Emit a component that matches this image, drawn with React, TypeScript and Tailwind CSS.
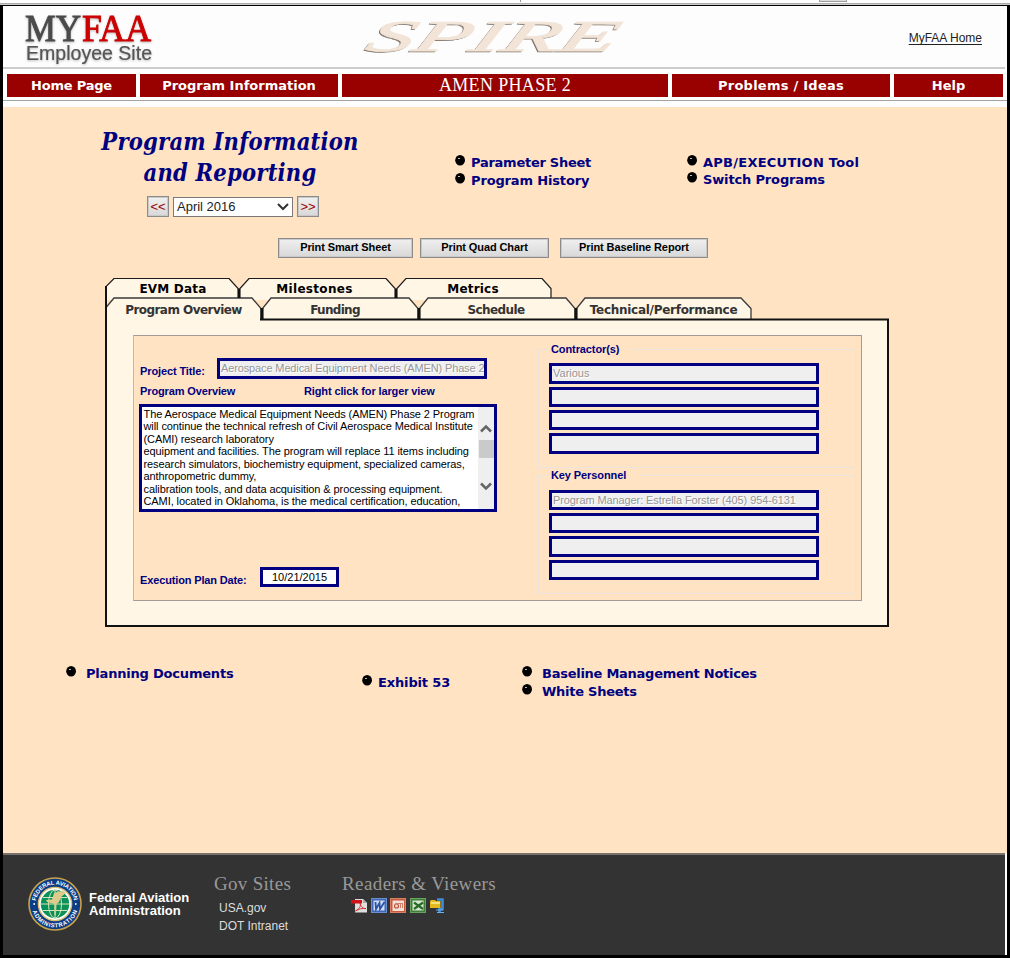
import type { ReactNode } from "react";

const verdana = "font-['DejaVu_Sans',sans-serif] font-bold";

function NavItem({ className, children }: { className: string; children: ReactNode }) {
  return (
    <a className={`flex h-[23px] shrink-0 items-center justify-center bg-[#990000] text-white ${className}`}>
      {children}
    </a>
  );
}

function Bullet() {
  return (
    <svg className="block shrink-0" width="10" height="11" viewBox="0 0 10 11">
      <ellipse cx="5.1" cy="5.3" rx="4.9" ry="5.3" fill="#000" />
      <rect x="3" y="3" width="2" height="1" fill="#bbb" />
    </svg>
  );
}

function BulletLink({ className = "", tracking = "tracking-[-0.26px]", children }: { className?: string; tracking?: string; children: ReactNode }) {
  return (
    <div className={`flex items-start ${className}`}>
      <Bullet />
      <a className={`${verdana} whitespace-nowrap text-[13px] leading-[16px] text-[#000080] ${tracking}`}>{children}</a>
    </div>
  );
}

function GrayButton({ className, children }: { className: string; children: ReactNode }) {
  return (
    <button
      className={`block shrink-0 whitespace-nowrap border border-[#8b8b8b] bg-linear-to-b from-[#f0f0f0] to-[#d8d8d8] shadow-[inset_0_0_0_1px_#c9c9c9] ${className}`}
    >
      {children}
    </button>
  );
}

function Field({ className = "h-[20px]", children }: { className?: string; children?: ReactNode }) {
  return (
    <div
      className={`w-[270px] shrink-0 overflow-hidden whitespace-nowrap border-[3px] border-[#000080] bg-[#efefef] pl-px text-[11px] leading-[14px] text-[#969696] [text-shadow:1px_1px_0_#fff] ${className}`}
    >
      {children}
    </div>
  );
}

function FieldGroup({ title, titleWidth, className, children }: { title: string; titleWidth: string; className: string; children: ReactNode }) {
  return (
    <div className={`flex w-[318px] flex-col border border-[#ebe3de] pl-[10px] ${className}`}>
      <div className={`-mt-[8px] -ml-[2px] h-[14px] shrink-0 bg-[#ffe3c3] pl-[4px] text-[11px] font-bold leading-[14px] tracking-[-0.1px] text-[#000080] ${titleWidth}`}>
        {title}
      </div>
      {children}
    </div>
  );
}

function SpireLogo() {
  return (
    <svg className="block overflow-visible" width="280" height="40" viewBox="360 16 280 40">
      <g fontFamily="Liberation Serif" fontSize="44" fontStyle="italic">
        <g transform="translate(362 52) skewX(-22)">
          <text textLength="249" lengthAdjust="spacingAndGlyphs" fill="#7d7268" stroke="#7d7268" strokeWidth="0.4">SPIRE</text>
        </g>
        <g transform="translate(363.500 50.800) skewX(-22)">
          <text textLength="249" lengthAdjust="spacingAndGlyphs" fill="#f2e4d7" stroke="#f2e4d7" strokeWidth="0.800">SPIRE</text>
        </g>
      </g>
    </svg>
  );
}

function Seal() {
  return (
    <svg className="block shrink-0" width="54" height="54" viewBox="0 0 54 54">
      <defs>
        <path id="ringTop" d="M7.600 27a19.400 19.400 0 0 1 38.800 0" />
        <path id="ringBottom" d="M3.600 27a23.400 23.400 0 0 0 46.800 0" />
      </defs>
      <circle cx="27" cy="27" r="26" fill="#0b3d86" stroke="#c8a24a" strokeWidth="1.6" />
      <circle cx="27" cy="27" r="16.600" fill="#fff" stroke="#d9bd72" strokeWidth="1.4" />
      <circle cx="27" cy="27" r="14.200" fill="#0a9059" />
      <g fill="none" stroke="#d9e5b8" strokeWidth="1">
        <ellipse cx="27" cy="27" rx="6.500" ry="14.200" />
        <path d="M13 27H41M15 20.500H39M15 33.500H39M27 13V41" />
      </g>
      <path d="M18 23L24 22.500L26 16L35 13.500L38 16L33 20L31 25L28.500 27L28 38L26.500 38L26.500 27L19 25Z" fill="#dccb8b" />
      <g fontFamily="Liberation Sans" fontWeight="bold" fontSize="5.8" fill="#fff">
        <text>
          <textPath href="#ringTop" startOffset="3" textLength="54">FEDERAL AVIATION</textPath>
        </text>
        <text>
          <textPath href="#ringBottom" startOffset="7" textLength="59">ADMINISTRATION</textPath>
        </text>
      </g>
      <circle cx="6.200" cy="27" r="0.900" fill="#fff" />
      <circle cx="47.800" cy="27" r="0.900" fill="#fff" />
    </svg>
  );
}

function ViewerIcons() {
  return (
    <svg className="block" width="94" height="16" viewBox="0 0 94 16">
      <path d="M4 1H12L16 5V14.500H4Z" fill="#dedede" />
      <path d="M12 1L16 5H12Z" fill="#aaa" />
      <path d="M0 2H11V5.500H0Z" fill="#d0121a" />
      <path d="M4.500 13C8 11 10.500 8 9 5C10 9 12 11 15 10.500C11 10 8 11 4.500 13Z" fill="none" stroke="#d2262b" strokeWidth="0.9" />
      <rect x="20.500" y="0.500" width="15" height="14" fill="#3f68b6" stroke="#6b8fd0" />
      <rect x="22.500" y="2.500" width="11" height="10" fill="#cfdcf4" />
      <path d="M24.500 4L25 11L28.500 5L29 11L33.500 4" fill="none" stroke="#2b51a3" strokeWidth="1.8" />
      <rect x="39.500" y="0.500" width="15" height="14" fill="#c65b3c" stroke="#d98066" />
      <rect x="41.500" y="2.500" width="11.500" height="10.500" fill="#f3dfd6" />
      <circle cx="45.500" cy="8" r="2" fill="none" stroke="#bd5437" strokeWidth="1.2" />
      <path d="M49.500 6V10M51.500 6V10M44 5.500H52" fill="none" stroke="#cf8169" />
      <rect x="59.500" y="0.500" width="15" height="14" fill="#3f7f3a" stroke="#69a362" />
      <rect x="61.500" y="2.500" width="11" height="10" fill="#d5e8d0" />
      <path d="M63 4.500L72 11M72 4.500L63 11" stroke="#2a6b2a" strokeWidth="2.200" />
      <path d="M86 1.500H91.500V11H88.500V14" fill="none" stroke="#3c8ddb" strokeWidth="2.600" />
      <path d="M79 3L80 2H84L85 3H89.500V10H79Z" fill="#e3b91e" />
      <path d="M80 4H89V6H80Z" fill="#f7e37c" />
      <path d="M85 12H92M86 14.500H93" stroke="#69b2ef" />
    </svg>
  );
}

function TabOutlines() {
  return (
    <svg className="absolute left-0 top-0" width="784" height="349" viewBox="105 278 784 349">
      <g fill="#fff6e6" stroke="#1c1c1c" strokeWidth="1.2">
        <path d="M105.500 300V287L114 278.500H229L238.500 289V300" />
        <path d="M239.500 300V289L249 278.500H386L395.500 289V300" />
        <path d="M396.500 300V289L406 278.500H542L551 288.500V300" />
      </g>
      <path d="M106 319.500H888V626H106Z" fill="#fff6e6" />
      <g fill="#fff6e6" stroke="#3a3a3a" strokeWidth="1.300">
        <path d="M106 320V307.500L114 298H252L261 308.500V320" />
        <path d="M262.500 320V308.500L271 298H409L418 308.500V320" />
        <path d="M419.500 320V308.500L428 298H566L575 308.500V320" />
        <path d="M576.500 320V308.500L585 298H741L751 308.500V320" />
      </g>
      <path d="M239 289V298M396 289V298M262 308V319M419 308V319M576 308V319" stroke="#111" strokeWidth="3" />
      <path d="M107 318V325H260V318Z" fill="#fff6e6" />
      <path d="M106 286V626H888V319.500H260" fill="none" stroke="#111" strokeWidth="2" />
    </svg>
  );
}

const tab = "shrink-0 whitespace-nowrap text-center font-['DejaVu_Sans',sans-serif] font-bold text-[12px] leading-[20px]";

export default function App() {
  return (
    <div className="flex h-[958px] w-[1010px] flex-col overflow-hidden bg-black font-['Liberation_Sans',sans-serif]">
      <div className="flex h-[3px] shrink-0 bg-white">
        <div className="ml-[520px] h-[2px] w-px bg-[#999]" />
        <div className="ml-[298px] h-[2px] w-[28px] border border-t-0 border-[#a0a0a0] bg-[#ddd]" />
      </div>
      <div className="h-[2px] shrink-0 border-t border-[#aaa] bg-[#ccc]" />

      <header className="ml-[3px] mt-px w-[1004px] shrink-0 bg-white">
        <div className="flex h-[61px] w-[1002px] items-start bg-[#fdfdfd]">
          <div className="w-[160px] shrink-0 pl-[21px] pt-[8px]">
            <svg className="block overflow-visible" width="130" height="52" viewBox="0 0 130 52">
              <g style={{ filter: "drop-shadow(0.5px 1px 1px #bbb)" }}>
                <g fontFamily="Liberation Serif" fontSize="37" strokeWidth="0.9">
                  <text x="1" y="27" textLength="56" lengthAdjust="spacingAndGlyphs" fill="#4b4b4b" stroke="#4b4b4b">MY</text>
                  <text x="58" y="27" textLength="69" lengthAdjust="spacingAndGlyphs" fill="#cc0000" stroke="#cc0000">FAA</text>
                </g>
                <text x="2" y="46" fontFamily="Liberation Sans" fontSize="19.5" textLength="126" lengthAdjust="spacingAndGlyphs" fill="#555" stroke="#555" strokeWidth="0.2">Employee Site</text>
              </g>
            </svg>
          </div>
          <div className="ml-[197px] pt-[10px]">
            <SpireLogo />
          </div>
          <a className="ml-auto mr-[23px] mt-[24px] whitespace-nowrap text-[12px] leading-[16px] text-[#222] underline underline-offset-2">MyFAA Home</a>
        </div>
        <div className="h-[2px] w-[1002px] bg-[#ccc]" />
        <nav className="flex h-[32px] w-[1004px] gap-[4px] border-b border-[#a5a5a5] pl-[4px] pt-[5px]">
          <NavItem className={`w-[129px] text-[13px] tracking-[-0.2px] ${verdana}`}>Home Page</NavItem>
          <NavItem className={`w-[198px] text-[13px] ${verdana}`}>Program Information</NavItem>
          <NavItem className="w-[326px] font-['Liberation_Serif',serif] text-[18px] tracking-[0.35px]">AMEN PHASE 2</NavItem>
          <NavItem className={`w-[218px] text-[13px] tracking-[0.25px] ${verdana}`}>Problems / Ideas</NavItem>
          <NavItem className={`w-[109px] text-[13px] ${verdana}`}>Help</NavItem>
        </nav>
        <div className="h-[6px]" />
      </header>

      <main className="ml-[3px] flex h-[746px] w-[1004px] shrink-0 flex-col bg-[#ffe3c3]">
        <div className="flex h-[131px] shrink-0">
          <div className="ml-[87px] w-[280px] shrink-0 pt-[20px]">
            <h1 className="text-center font-['DejaVu_Serif_Condensed','DejaVu_Serif',serif] text-[23.500px] font-bold italic leading-[31px] tracking-[0.2px] text-[#000080]">
              <span className="block whitespace-nowrap">Program Information</span>
              <span className="block whitespace-nowrap">and Reporting</span>
            </h1>
            <div className="mt-[7px] flex items-start pl-[57px]">
              <GrayButton className="h-[21px] w-[22px] text-[13px] leading-[17px] text-[#990000]">&lt;&lt;</GrayButton>
              <div className="ml-[4px] mt-px flex h-[20px] w-[120px] items-center justify-between border border-[#7a7a7a] bg-white pl-[3px] pr-[3px] text-[13px] text-[#222]">
                April 2016
                <svg width="12" height="8" viewBox="0 0 12 8"><path d="M1 1L6 6L11 1" fill="none" stroke="#333" strokeWidth="2" /></svg>
              </div>
              <GrayButton className="ml-[4px] h-[21px] w-[22px] text-[13px] leading-[17px] text-[#990000]">&gt;&gt;</GrayButton>
            </div>
          </div>
          <div className="ml-[85px] flex w-[200px] flex-col gap-[2px] pt-[48px]">
            <BulletLink className="gap-[6px]">Parameter Sheet</BulletLink>
            <BulletLink className="gap-[6px]" tracking="tracking-[-0.15px]">Program History</BulletLink>
          </div>
          <div className="ml-[32px] flex w-[220px] flex-col gap-px pt-[48px]">
            <BulletLink className="gap-[6px]" tracking="tracking-[0.25px]">APB/EXECUTION Tool</BulletLink>
            <BulletLink className="gap-[6px]" tracking="tracking-[-0.15px]">Switch Programs</BulletLink>
          </div>
        </div>

        <div className="ml-[275px] flex h-[40px] shrink-0 text-[11px] font-bold leading-[16px] tracking-[-0.1px] text-black">
          <GrayButton className="flex h-[20px] w-[135px] justify-center">Print Smart Sheet</GrayButton>
          <GrayButton className="ml-[7px] flex h-[20px] w-[129px] justify-center">Print Quad Chart</GrayButton>
          <GrayButton className="ml-[11px] flex h-[20px] w-[148px] justify-center">Print Baseline Report</GrayButton>
        </div>

        <section className="relative ml-[102px] h-[349px] w-[784px] shrink-0">
          <TabOutlines />
          <div className="relative flex h-full flex-col">
            <div className="flex h-[21px] shrink-0 pt-px">
              <div className={`w-[136px] tracking-[0.2px] ${tab}`}>EVM Data</div>
              <div className={`ml-[1px] w-[145px] tracking-[0.3px] ${tab}`}>Milestones</div>
              <div className={`ml-[12px] w-[148px] tracking-[0.2px] ${tab}`}>Metrics</div>
            </div>
            <div className="flex h-[21px] shrink-0 pt-px text-[#333]">
              <div className={`w-[157px] tracking-[-0.55px] ${tab}`}>Program Overview</div>
              <div className={`w-[146px] tracking-[-0.7px] ${tab}`}>Funding</div>
              <div className={`ml-[12px] w-[152px] tracking-[-0.6px] ${tab}`}>Schedule</div>
              <div className={`ml-[8px] w-[167px] tracking-[-0.28px] ${tab}`}>Technical/Performance</div>
            </div>

            <div className="ml-[28px] mt-[15px] flex h-[266px] w-[729px] shrink-0 border border-[#a39c96] border-l-[#bbb] bg-[#ffe3c3]">
              <div className="w-[404px] shrink-0 pl-[5px] text-[11px]">
                <div className="flex h-[45px] pt-[22px]">
                  <label className="w-[78px] shrink-0 pl-px pt-[6px] font-bold leading-[14px] tracking-[-0.12px] text-[#000080]">Project Title:</label>
                  <Field className="h-[21px] tracking-[-0.13px]">Aerospace Medical Equipment Needs (AMEN) Phase 2</Field>
                </div>
                <div className="flex h-[23px] pl-px pt-[3px] font-bold leading-[14px] tracking-[-0.12px] text-[#000080]">
                  <span className="w-[164px]">Program Overview</span>
                  <span>Right click for larger view</span>
                </div>
                <div className="flex h-[108px] w-[358px] border-[3px] border-[#000080] bg-white">
                  <div className="w-[336px] shrink-0 whitespace-nowrap pl-[1.500px] pt-px text-[11px] leading-[12.450px] tracking-[-0.09px] text-black">
                    <div>The Aerospace Medical Equipment Needs (AMEN) Phase 2 Program</div>
                    <div>will continue the technical refresh of Civil Aerospace Medical Institute</div>
                    <div>(CAMI) research laboratory</div>
                    <div>equipment and facilities. The program will replace 11 items including</div>
                    <div>research simulators, biochemistry equipment, specialized cameras,</div>
                    <div>anthropometric dummy,</div>
                    <div>calibration tools, and data acquisition &amp; processing equipment.</div>
                    <div>CAMI, located in Oklahoma, is the medical certification, education,</div>
                  </div>
                  <div className="flex flex-1 flex-col items-center bg-[#efefef] pt-[17px]">
                    <svg width="12" height="9" viewBox="0 0 12 9"><path d="M1 7.500L6 2.500L11 7.500" fill="none" stroke="#666" strokeWidth="2.500" /></svg>
                    <div className="mt-[7px] h-[18px] w-[15px] bg-[#cacaca]" />
                    <svg className="mt-[24px]" width="12" height="9" viewBox="0 0 12 9"><path d="M1 1.500L6 6.500L11 1.500" fill="none" stroke="#666" strokeWidth="2.500" /></svg>
                  </div>
                </div>
                <div className="flex pt-[55px]">
                  <label className="w-[121px] shrink-0 pl-px pt-[6px] font-bold leading-[14px] tracking-[-0.14px] text-[#000080]">Execution Plan Date:</label>
                  <div className="h-[20px] w-[79px] border-[3px] border-[#000080] bg-white text-center leading-[14px] text-black">10/21/2015</div>
                </div>
              </div>
              <div className="pt-[13px]">
                <FieldGroup title="Contractor(s)" titleWidth="w-[85px]" className="h-[119px]">
                  <div className="mt-[7px] flex flex-col gap-[3px]">
                    <Field className="h-[21px]">Various</Field>
                    <Field />
                    <Field />
                    <Field className="h-[21px]" />
                  </div>
                </FieldGroup>
                <FieldGroup title="Key Personnel" titleWidth="w-[92px]" className="mt-[7px] h-[119px]">
                  <div className="mt-[8px] flex flex-col gap-[3px]">
                    <Field className="h-[20px] tracking-[-0.1px]">Program Manager: Estrella Forster (405) 954-6131</Field>
                    <Field />
                    <Field className="h-[21px]" />
                    <Field />
                  </div>
                </FieldGroup>
              </div>
            </div>
          </div>
        </section>

        <div className="flex pl-[63px] pt-[39px]">
          <BulletLink className="w-[296px] gap-[10px]" tracking="tracking-[-0.2px]">Planning Documents</BulletLink>
          <BulletLink className="w-[160px] gap-[6px] pt-[9px]" tracking="tracking-[-0.15px]">Exhibit 53</BulletLink>
          <div className="flex flex-col gap-[2px]">
            <BulletLink className="gap-[10px]">Baseline Management Notices</BulletLink>
            <BulletLink className="gap-[10px]">White Sheets</BulletLink>
          </div>
        </div>
      </main>

      <div className="ml-[3px] h-[102px] w-[1004px] shrink-0 bg-white">
        <footer className="flex h-[102px] w-[1002px] border-t-2 border-[#77726b] bg-[#333]">
          <div className="flex w-[211px] shrink-0 items-start pl-[25px] pt-[22px]">
            <Seal />
            <div className="ml-[7px] mt-[14px] whitespace-nowrap text-[13px] font-bold leading-[13px] text-white">
              <div>Federal Aviation</div>
              <div>Administration</div>
            </div>
          </div>
          <div className="w-[128px] shrink-0 pt-[18px]">
            <h2 className="whitespace-nowrap font-['Liberation_Serif',serif] text-[19px] leading-[22px] tracking-[0.3px] text-[#999]">Gov Sites</h2>
            <div className="pl-[5px] pt-[4px] text-[12px] leading-[18px] text-[#ddd]">
              <div>USA.gov</div>
              <div>DOT Intranet</div>
            </div>
          </div>
          <div className="pt-[18px]">
            <h2 className="whitespace-nowrap font-['Liberation_Serif',serif] text-[19px] leading-[22px] tracking-[0.4px] text-[#999]">Readers &amp; Viewers</h2>
            <div className="pl-[9px] pt-[3px]">
              <ViewerIcons />
            </div>
          </div>
        </footer>
      </div>
    </div>
  );
}
